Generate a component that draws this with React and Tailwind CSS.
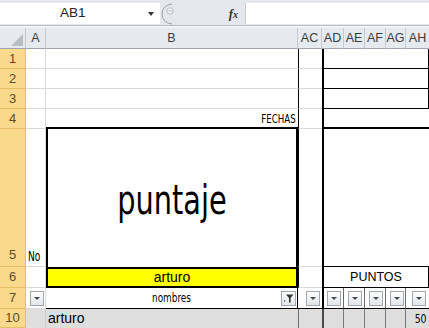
import React from 'react';

const gridLine = 'border-[#dadada]';
const cond = "font-['DejaVu_Sans',sans-serif] text-black";

function RowHead({ children, bottom = false }) {
  return (
    <div className={`flex justify-center bg-[#f9d98c] border-r border-b border-[#e6bf66] text-[13px] text-[#5c4b27] font-['Liberation_Sans',sans-serif] ${bottom ? 'items-end pb-[2px]' : 'items-center'}`}>
      {children}
    </div>
  );
}

function ColHead({ children, className = '' }) {
  return (
    <div className={`flex items-center justify-center bg-[#e6e9ee] border-r border-b border-r-[#c6cbd2] border-b-[#9ea5ae] text-[12.5px] text-[#3b3b3b] font-['Liberation_Sans',sans-serif] ${className}`}>
      {children}
    </div>
  );
}

function Drop() {
  return (
    <div className="w-[14px] h-[15px] border border-[#a2a8af] bg-linear-to-b from-white to-[#e2e4e8] flex items-center justify-center">
      <div className="w-0 h-0 border-l-[3px] border-r-[3px] border-t-[3px] border-l-transparent border-r-transparent border-t-[#4a4a4a]" />
    </div>
  );
}

function FilterBtn() {
  return (
    <div className="w-[15px] h-[15px] border border-[#a2a8af] bg-linear-to-b from-white to-[#e2e4e8] flex items-center justify-center">
      <svg width="11" height="9" viewBox="0 0 11 9">
        <path d="M0.5 6.5 L2.5 6.5 L1.5 8 Z" fill="#444" />
        <path d="M3 0.5 L10.5 0.5 L7.6 4 L7.6 8.5 L6 8.5 L6 4 Z" fill="#333" />
      </svg>
    </div>
  );
}

export default function App() {
  return (
    <div className="w-[429px] h-[328px] overflow-hidden bg-white font-['Liberation_Sans',sans-serif]">
      {/* Formula bar */}
      <div className="h-[28px] bg-[#f3f4f6]">
        <div className="h-[26px] bg-[#e4e7eb] border-b border-[#b7bdc5] flex pt-[3px] pb-[1px]">
          <div className="w-[160px] bg-white flex items-center relative">
            <span className="pl-[60px] text-[13.5px] text-[#222]">AB1</span>
            <div className="absolute right-[6px] top-[9px] w-0 h-0 border-l-[3.5px] border-r-[3.5px] border-t-[4px] border-l-transparent border-r-transparent border-t-[#333]" />
          </div>
          <div className="w-[85px] flex items-center">
            <svg width="22" height="22" viewBox="0 0 22 22">
              <path d="M12 1 A10 10 0 0 0 12 21" fill="none" stroke="#9aa0a7" strokeWidth="1" />
              <circle cx="10" cy="8" r="3.2" fill="#f4f5f7" stroke="#b8bdc4" strokeWidth="1" />
              <path d="M8.3 8 L11.7 8" stroke="#a8adb3" strokeWidth="1" />
            </svg>
            <span className="ml-auto mr-[7px] text-[13px] italic font-bold font-['Liberation_Serif',serif] text-[#333]">
              f<span className="text-[10px]">x</span>
            </span>
          </div>
          <div className="flex-1 bg-white border-l border-[#c5cad1]" />
        </div>
      </div>

      {/* Sheet */}
      <div className="grid grid-cols-[26px_20px_252px_24px_22px_21px_21px_20px_23px] grid-rows-[21px_20px_20px_20px_20px_138px_21px_21px_19px]">
        {/* header */}
        <div className="bg-[#e6e9ee] border-r border-b border-r-[#c6cbd2] border-b-[#9ea5ae] flex items-end justify-end pr-[2px] pb-[2px]">
          <svg width="12" height="12" viewBox="0 0 12 12">
            <path d="M12 0 L12 12 L0 12 Z" fill="#b9bec4" />
          </svg>
        </div>
        <ColHead>A</ColHead>
        <ColHead>B</ColHead>
        <ColHead>AC</ColHead>
        <ColHead>AD</ColHead>
        <ColHead>AE</ColHead>
        <ColHead>AF</ColHead>
        <ColHead>AG</ColHead>
        <ColHead className="border-r-0">AH</ColHead>

        {/* rows 1-3 */}
        {[1, 2, 3].map((n) => (
          <React.Fragment key={n}>
            <RowHead>{n}</RowHead>
            <div className={`border-r border-b ${gridLine}`} />
            <div className={`border-b ${gridLine}`} />
            <div className={`border-l border-l-black border-r-0 border-b ${gridLine}`} />
            <div className="col-span-5 border-l-2 border-l-black border-b border-b-black border-r border-r-black" />
          </React.Fragment>
        ))}

        {/* row 4 */}
        <RowHead>4</RowHead>
        <div className={`border-r border-b ${gridLine}`} />
        <div className="border-b-2 border-black flex items-end justify-end pb-[2px] pr-[2px]">
          <span className={`${cond} text-[12px] leading-none inline-block scale-x-[0.72] origin-right`}>FECHAS</span>
        </div>
        <div className={`border-l border-l-black border-b ${gridLine}`} />
        <div className="col-span-5 border-l-2 border-l-black border-b-2 border-b-black" />

        {/* row 5 */}
        <RowHead bottom>5</RowHead>
        <div className={`border-r border-b ${gridLine} flex items-end pb-[3px] pl-[2px]`}>
          <span className={`${cond} text-[14px] leading-none inline-block scale-x-[0.65] origin-left`}>No</span>
        </div>
        <div className="border-l-2 border-r-2 border-black flex items-center justify-center pt-[4px]">
          <span className={`${cond} text-[40px] leading-none inline-block scale-x-[0.72]`}>puntaje</span>
        </div>
        <div className={`border-l border-l-black border-b ${gridLine}`} />
        <div className="col-span-5 border-l-2 border-l-black border-b border-b-black" />

        {/* row 6 */}
        <RowHead>6</RowHead>
        <div className={`border-r border-b ${gridLine}`} />
        <div className="bg-[#ffff00] border-2 border-black flex items-center justify-center text-[14px] text-black">
          arturo
        </div>
        <div className={`border-l border-l-black border-b ${gridLine}`} />
        <div className="col-span-5 border-l-2 border-l-black border-r border-r-black border-b border-b-black flex items-center justify-center text-[12.5px] text-black">
          PUNTOS
        </div>

        {/* row 7 */}
        <RowHead>7</RowHead>
        <div className={`border-r border-b ${gridLine} flex items-center justify-end pr-[1px]`}>
          <Drop />
        </div>
        <div className="border-r border-r-black border-b border-b-black flex items-center relative">
          <span className={`${cond} text-[12px] leading-none w-full text-center inline-block scale-x-[0.74]`}>nombres</span>
          <div className="absolute right-[1px] top-[3px]">
            <FilterBtn />
          </div>
        </div>
        <div className="border-b border-b-black flex items-center justify-end pr-[2px]">
          <Drop />
        </div>
        <div className="border-l-2 border-l-black border-r border-r-[#6b6b6b] border-b border-b-black flex items-center justify-end pr-[2px]">
          <Drop />
        </div>
        <div className="border-r border-r-[#6b6b6b] border-b border-b-black flex items-center justify-end pr-[2px]">
          <Drop />
        </div>
        <div className="border-r border-r-[#6b6b6b] border-b border-b-black flex items-center justify-end pr-[2px]">
          <Drop />
        </div>
        <div className="border-r border-r-[#6b6b6b] border-b border-b-black flex items-center justify-end pr-[1px]">
          <Drop />
        </div>
        <div className="border-b border-b-black flex items-center justify-end pr-[3px]">
          <Drop />
        </div>

        {/* row 10 */}
        <RowHead>10</RowHead>
        <div className="bg-[#dedede] border-r border-[#cfcfcf]" />
        <div className="bg-[#dedede] flex items-center pl-[2px] text-[14px] text-black">arturo</div>
        <div className="bg-[#dedede] border-l border-l-[#6e6e6e]" />
        <div className="bg-[#dedede] border-l-2 border-l-[#4a4a4a] border-r border-r-[#7a7a7a]" />
        <div className="bg-[#dedede] border-r border-r-[#7a7a7a]" />
        <div className="bg-[#dedede] border-r border-r-[#7a7a7a]" />
        <div className="bg-[#dedede] border-r border-r-[#7a7a7a]" />
        <div className="bg-[#dedede] flex items-center justify-end pr-[2px]">
          <span className={`${cond} text-[13px] leading-none inline-block scale-x-[0.72] origin-right`}>50</span>
        </div>
      </div>
    </div>
  );
}
